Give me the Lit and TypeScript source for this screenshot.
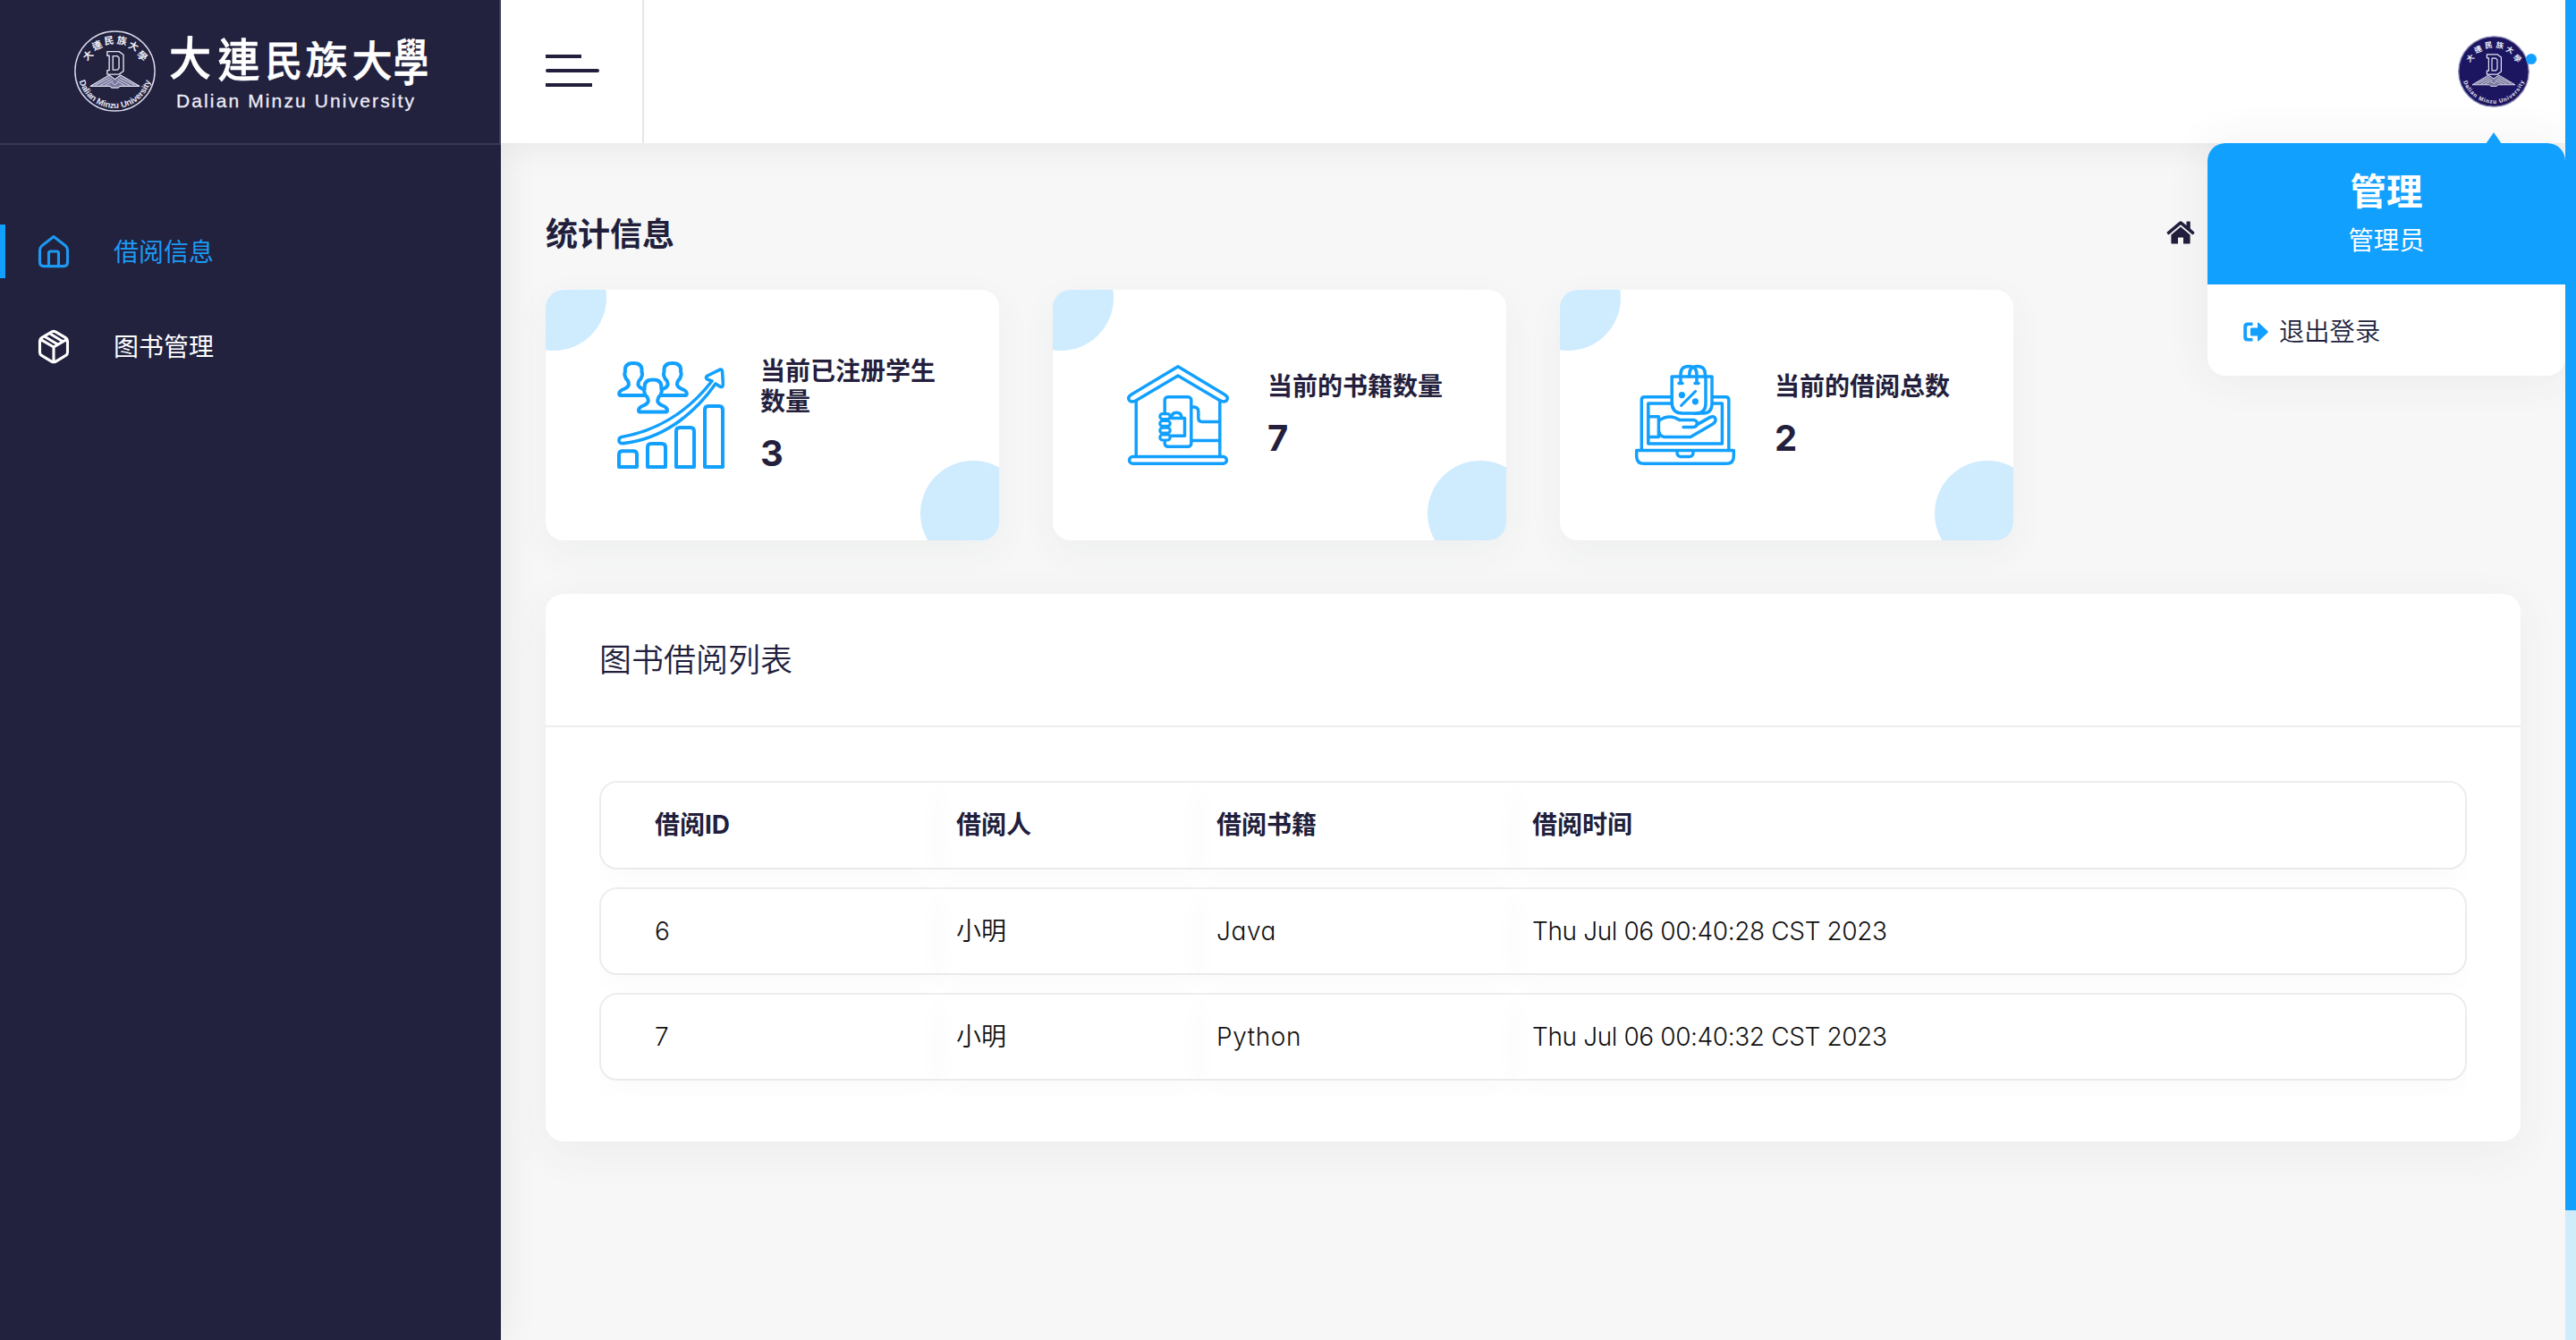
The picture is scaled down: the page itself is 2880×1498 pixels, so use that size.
import { LitElement, html, css, svg } from "lit";
import { customElement, property } from "lit/decorators.js";

const CJK = css`Inter, "Noto Sans CJK SC", sans-serif`;

/* ---------- University emblem ---------- */

const EMBLEM_CHARS: [string, number][] = [
  ["大", -60],
  ["連", -35],
  ["民", -11],
  ["族", 13],
  ["大", 37],
  ["學", 61],
];

@customElement("school-emblem")
export class SchoolEmblem extends LitElement {
  @property({ type: Boolean }) solid = false;

  static styles = css`
    :host {
      display: block;
    }
    .emblem {
      display: block;
      width: 100%;
      height: 100%;
      overflow: visible;
    }
    .hanzi {
      font-family: "Noto Sans CJK TC", sans-serif;
      font-weight: 700;
      fill: #f0f0fa;
    }
    .latin {
      font-family: "Liberation Sans", sans-serif;
      font-weight: 700;
      fill: #e6e6f4;
    }
  `;

  render() {
    const size = this.solid ? 10.5 : 12;
    const latin = this.solid ? 8 : 10.6;
    const r = this.solid ? 44.5 : 45.6;
    return html`<svg class="emblem" viewBox="0 0 100 100">
      <circle cx="50" cy="50" r="49" fill=${this.solid ? "#1c1661" : "none"} stroke=${this.solid ? "#8d8ab8" : "#d9d9ea"} stroke-width="1.6"></circle>
      ${EMBLEM_CHARS.map(([c, a]) => {
        const rad = (a * Math.PI) / 180;
        const x = 50 + 38 * Math.sin(rad);
        const y = 50 - 38 * Math.cos(rad);
        return svg`<text class="hanzi" font-size=${size} text-anchor="middle" transform="translate(${x} ${y}) rotate(${a * 0.7})" dy="4">${c}</text>`;
      })}
      <g fill="none" stroke="#e4e4f2" stroke-width="1.5" stroke-linejoin="round">
        <path d="M40.5 26 H55 L60.5 30 V50 L55 54 H40.5 V49 H43 V31 H40.5 Z"></path>
        <path d="M47.5 31.5 H53 L55 33.5 V46.5 L53 48.5 H47.5 Z"></path>
        <path d="M43 55 L50 60 L57 55 L80 68.5 H56 L54 70.5 H46 L44 68.5 H20 Z" fill="#77769c" stroke-width="1.2"></path>
        <path d="M26 67 L44 58 M32 67.5 L46 60 M38 67.5 L48 62 M74 67 L56 58 M68 67.5 L54 60 M62 67.5 L52 62 M46 64 L50 67 L54 64" stroke-width="0.9"></path>
      </g>
      <path id="arc" fill="none" d="M ${50 - r} 50 A ${r} ${r} 0 0 0 ${50 + r} 50"></path>
      <text class="latin" font-size=${latin}>
        <textPath href="#arc" startOffset="50%" text-anchor="middle" textLength=${this.solid ? 112 : 118}>Dalian Minzu University</textPath>
      </text>
    </svg>`;
  }
}

/* ---------- Sidebar ---------- */

const LOGO_CHARS: [string, number, number, number, number][] = [
  ["大", 137.5, 40, 1, 1.08],
  ["連", 192, 42.5, 1, 1.08],
  ["民", 242.5, 42, 0.88, 1],
  ["族", 290, 42, 1, 0.92],
  ["大", 341, 43, 0.96, 0.98],
  ["學", 384.5, 44.5, 0.84, 1.18],
];

const homeIcon = svg`<path d="M17 1.6 L30 11.6 Q32.5 13.6 32.5 16.5 V30 Q32.5 34.6 28 34.6 H6 Q1.5 34.6 1.5 30 V16.5 Q1.5 13.6 4 11.6 Z M11.5 34.5 V20 Q11.5 18 13.5 18 H20.5 Q22.5 18 22.5 20 V34.5"></path>`;
const boxIcon = svg`<path d="M15 1.9 Q17 0.9 19 1.9 L30.5 8.6 Q32.5 9.8 32.5 12 V25 Q32.5 27.2 30.5 28.4 L19 35.3 Q17 36.3 15 35.3 L3.5 28.4 Q1.5 27.2 1.5 25 V12 Q1.5 9.8 3.5 8.6 Z M2.3 10.4 L17 19 L31.7 10.4 M17 19 V35.5 M6.5 7 L21.5 16 M12.5 3.7 L27.2 12.7"></path>`;

@customElement("side-bar")
export class SideBar extends LitElement {
  static styles = css`
    :host {
      display: block;
      width: 560px;
      flex: none;
      background: #22213e;
      box-shadow: 0 0 42px rgba(0, 0, 0, 0.08);
      position: relative;
      z-index: 1;
      font-family: ${CJK};
    }
    .brand {
      box-sizing: border-box;
      height: 162px;
      border-bottom: 2px solid #3a3953;
      border-right: 2px solid #3a3953;
      padding: 25px 0 0 75px;
    }
    .logo {
      display: grid;
      grid-template-columns: 91px 1fr;
      width: 410px;
      height: 110px;
    }
    .seal {
      grid-area: 1 / 1;
      width: 91px;
      height: 91px;
      margin: 9px 0 0 8px;
    }
    .wordmark {
      grid-area: 1 / 1 / 2 / 3;
      width: 410px;
      height: 110px;
    }
    .brush {
      font-family: "Noto Sans CJK TC", sans-serif;
      font-weight: 500;
      font-size: 47px;
      fill: #fff;
      stroke: #fff;
      stroke-width: 0.6px;
      stroke-linejoin: round;
    }
    .latin {
      font-family: "Liberation Sans", sans-serif;
      font-size: 21px;
      fill: #ededf8;
      stroke: #ededf8;
      stroke-width: 0.3px;
    }
    .menu {
      display: flex;
      flex-direction: column;
      gap: 46px;
      padding-top: 89px;
    }
    .item {
      display: flex;
      align-items: center;
      box-sizing: border-box;
      height: 60px;
      border-left: 6px solid transparent;
      padding: 2px 0 0 37px;
      color: #fff;
      font-size: 28px;
      line-height: 42px;
    }
    .item.active {
      border-left-color: #12a0ff;
      color: #1c9af3;
    }
    .glyph {
      width: 34px;
      height: 38px;
      margin-right: 50px;
      fill: none;
      stroke: currentColor;
      stroke-width: 3.1;
      stroke-linejoin: round;
      stroke-linecap: round;
      overflow: visible;
    }
  `;

  render() {
    return html`
      <div class="brand">
        <div class="logo">
          <school-emblem class="seal"></school-emblem>
          <svg class="wordmark" viewBox="0 0 410 110">
            ${LOGO_CHARS.map(
              ([c, x, y, sx, sy]) =>
                svg`<text class="brush" text-anchor="middle" transform="translate(${x} ${y}) scale(${sx} ${sy})" dy="17.5">${c}</text>`
            )}
            <text class="latin" x="122" y="95.3" textLength="266">Dalian Minzu University</text>
          </svg>
        </div>
      </div>
      <nav class="menu">
        <a class="item active"><svg class="glyph" viewBox="0 0 34 38">${homeIcon}</svg><span>借阅信息</span></a>
        <a class="item"><svg class="glyph" viewBox="0 0 34 38">${boxIcon}</svg><span>图书管理</span></a>
      </nav>
    `;
  }
}

/* ---------- Header with the open profile menu ---------- */

@customElement("top-bar")
export class TopBar extends LitElement {
  static styles = css`
    :host {
      display: flex;
      justify-content: space-between;
      height: 160px;
      flex: none;
      background: #fff;
      position: relative;
      z-index: 2;
      box-shadow: 0 0 40px rgba(0, 0, 0, 0.08);
      clip-path: inset(0 0 -500px 0);
      font-family: ${CJK};
    }
    .toggle {
      box-sizing: border-box;
      width: 160px;
      border-right: 2px solid #e6e6e6;
      padding: 61px 0 0 50px;
      display: flex;
      flex-direction: column;
      gap: 12px;
    }
    .line {
      height: 4px;
      width: 60px;
      border-radius: 2px;
      background: #211f3c;
    }
    .line.short {
      width: 40px;
      border-radius: 0;
    }
    .line.mid {
      width: 52px;
      border-radius: 0;
    }
    .profile {
      position: relative;
      width: 80px;
      height: 80px;
      margin: 40px 40px 0 0;
    }
    .avatar {
      width: 80px;
      height: 80px;
    }
    .dot {
      position: absolute;
      left: 76px;
      top: 20px;
      width: 12px;
      height: 12px;
      border-radius: 50%;
      background: #12a0ff;
    }
    .dropdown {
      position: absolute;
      right: -40px;
      top: 120px;
      width: 400px;
      height: 260px;
      border-radius: 20px;
      background: #fff;
      box-shadow: 0 0 50px rgba(82, 63, 105, 0.08);
    }
    .arrow {
      position: absolute;
      left: 311px;
      top: -12px;
      width: 18px;
      height: 13px;
      background: #12a0ff;
      clip-path: polygon(50% 0, 100% 100%, 0 100%);
    }
    .head {
      box-sizing: border-box;
      height: 158px;
      padding-top: 31px;
      border-radius: 20px 20px 0 0;
      background: #12a0ff;
      color: #fff;
      text-align: center;
    }
    .name {
      font-size: 40.5px;
      line-height: 48px;
      font-weight: 700;
    }
    .role {
      font-size: 28.4px;
      line-height: 42px;
      margin-top: 9px;
    }
    .logout {
      display: flex;
      align-items: center;
      padding: 32px 40px 30px;
      height: 42px;
      font-size: 28.3px;
      line-height: 42px;
      font-weight: 350;
      color: #211f3c;
    }
    .exit {
      width: 28px;
      height: 22px;
      margin-right: 12px;
      fill: #12a0ff;
    }
  `;

  render() {
    return html`
      <div class="toggle">
        <div class="line short"></div>
        <div class="line"></div>
        <div class="line mid"></div>
      </div>
      <div class="profile">
        <school-emblem class="avatar" solid></school-emblem>
        <div class="dot"></div>
        <div class="dropdown">
          <div class="arrow"></div>
          <div class="head">
            <div class="name">管理</div>
            <div class="role">管理员</div>
          </div>
          <div class="logout">
            <svg class="exit" viewBox="0 0 28 22">
              <path d="M10.5 0.5 V4 H6 Q4 4 4 6 V16 Q4 18 6 18 H10.5 V21.5 H5 Q0.3 21.5 0.3 17 V5 Q0.3 0.5 5 0.5 Z"></path>
              <path d="M16 1.6 Q16 0 17.6 1 L27.2 10 Q28.2 11 27.2 12 L17.6 21 Q16 22 16 20.4 V15.5 H9 Q8 15.5 8 14.5 V7.5 Q8 6.5 9 6.5 H16 Z"></path>
            </svg>
            <span>退出登录</span>
          </div>
        </div>
      </div>
    `;
  }
}

/* ---------- Statistic cards ---------- */

const person =
  "M-9.3 9.5 C-9.3 3.5 -5 2 0 2 C5 2 9.3 3.5 9.3 9.5 V12 Q10.6 14 9 17.5 Q8.6 19.5 6.6 21 Q5 24 5.2 26 Q6 29 10 30.6 Q16 32.8 16 36 Q16 38 14.5 38 H-14.5 Q-16 38 -16 36 Q-16 32.8 -10 30.6 Q-6 29 -5.2 26 Q-5 24 -6.6 21 Q-8.6 19.5 -9 17.5 Q-10.6 14 -9.3 12 Z";

const growthIcon = svg`
  <g stroke-width="4" fill="#fff">
    <path d=${person} transform="translate(18.2 0)"></path>
    <path d=${person} transform="translate(61.8 0)"></path>
    <path d=${person} transform="translate(40 18.6)"></path>
    <path stroke-width="3.6" d="M5 84.5 C42 78 78 58 106 22 L100.5 19.8 Q98.2 18 101 16 L114.5 9.3 Q117.4 8.2 117.6 11.5 L118.4 25.5 Q118.4 29.6 114.8 28 L110 25 C84 62 48 87 7 91.6 Q2 92 2 88.4 Q2 85 5 84.5 Z"></path>
    <path d="M2 118 V104 Q2 100.2 6 100.2 H18 Q22 100.2 22 104 V118 Z"></path>
    <path d="M34 118 V96 Q34 92 38 92 H50 Q54 92 54 96 V118 Z"></path>
    <path d="M66 118 V78 Q66 74 70 74 H82 Q86 74 86 78 V118 Z"></path>
    <path d="M98 118 V54 Q98 50 102 50 H114 Q118 50 118 54 V118 Z"></path>
  </g>`;

const houseIcon = svg`
  <g stroke-width="3.5" fill="none">
    <path d="M13.2 44 V106 M106.8 44 V106"></path>
    <path d="M60 5.8 L112 37 Q117.2 40.4 114.2 43.8 Q111 46.4 106.5 43.6 L60 16 L13.5 43.6 Q9 46.4 5.8 43.8 Q2.8 40.4 8 37 Z" fill="#fff"></path>
    <rect x="5.6" y="106.6" width="108.8" height="7.6" rx="3.8"></rect>
    <rect x="45.2" y="39.8" width="29.6" height="55.4" rx="3.5"></rect>
    <path d="M52 63.5 H67.5 V83.3 H52"></path>
    <path d="M52.8 62.5 Q53 57.2 58.4 57.2 Q63.8 57.2 64 62.5"></path>
    <path d="M76 51 Q82.8 50.5 82.8 56 V63 Q82.8 67.5 87 67.5 H106.5 M76 88.4 H106.5"></path>
    <g fill="#fff" stroke-width="3.2">
      <rect x="39.8" y="58.6" width="11.4" height="6" rx="3"></rect>
      <rect x="39.8" y="66.4" width="11.4" height="6" rx="3"></rect>
      <rect x="39.8" y="74.2" width="11.4" height="6" rx="3"></rect>
      <rect x="39.8" y="82" width="11.4" height="6" rx="3"></rect>
    </g>
  </g>`;

const laptopIcon = svg`
  <g stroke-width="3.5" fill="none">
    <path d="M11.3 98 V43 Q11.3 39.7 14.6 39.7 H105.4 Q108.8 39.7 108.8 43 V98"></path>
    <rect x="18.8" y="47" width="82.6" height="45"></rect>
    <path d="M5.7 99.5 H114.3 V106 Q114.3 114.3 106 114.3 H14 Q5.7 114.3 5.7 106 Z"></path>
    <path d="M51 100 Q50.6 106.6 55 106.6 H65 Q69.4 106.6 69 100"></path>
    <path d="M82 17 H90 V47 Q90 58 80 58 H70" fill="#fff"></path>
    <path d="M45.2 17 H83 V47 Q83 58 72 58 H57 Q45.2 58 45.2 46 Z" fill="#fff"></path>
    <path d="M55 24 V14.5 Q55 5.6 64 5.6 Q73 5.6 73 14.5 V24 M64.8 17 V14.5 Q64.8 5.6 73.6 5.6 Q82.4 5.6 82.4 14.5 V17"></path>
    <path d="M53 24.4 H57 M71 24.4 H75"></path>
    <path d="M71.6 33.4 L55.6 49.4" stroke-width="3"></path>
    <circle cx="56.4" cy="37.6" r="3.6" fill="#12a0ff" stroke="none"></circle>
    <circle cx="71.4" cy="44.8" r="3.6" fill="#12a0ff" stroke="none"></circle>
    <path d="M20 61.7 H30.4 V84.5 H20"></path>
    <path d="M31 66 Q40 59.6 49 63.2 L54 65.6 H69.5 Q74 66 73.4 70.6 L88 62.4 Q92.6 60.4 94 64.6 Q94.6 67.6 91 70 L66 84.5 H37 Q31.6 84 31 79"></path>
    <path d="M58 73.6 H68.5 Q72.6 73.6 73.4 70.2"></path>
  </g>`;

@customElement("stat-card")
export class StatCard extends LitElement {
  @property() label = "";
  @property({ type: Number }) value = 0;
  @property({ attribute: false }) icon: unknown = null;

  static styles = css`
    :host {
      display: block;
      border-radius: 20px;
      background: #fff;
      box-shadow: 0 12px 40px rgba(62, 73, 84, 0.05);
      color: #241f3d;
      font-family: ${CJK};
    }
    .body {
      position: relative;
      overflow: hidden;
      box-sizing: border-box;
      height: 280px;
      border-radius: 20px;
      padding: 0 60px 0 80px;
      display: flex;
      align-items: center;
      gap: 40px;
    }
    .bubble {
      position: absolute;
      width: 118px;
      height: 118px;
      border-radius: 50%;
      background: #cfebfe;
    }
    .bubble.tl {
      left: -50px;
      top: -50px;
    }
    .bubble.br {
      left: 419px;
      top: 191px;
    }
    .icon {
      width: 120px;
      height: 120px;
      flex: none;
      stroke: #12a0ff;
      stroke-linejoin: round;
      stroke-linecap: round;
    }
    .label {
      padding-top: 2px;
      font-size: 28px;
      line-height: 33.6px;
      font-weight: 700;
    }
    .value {
      margin-top: 16px;
      font-size: 40px;
      line-height: 48px;
      font-weight: 700;
    }
  `;

  render() {
    return html`<div class="body">
      <div class="bubble tl"></div>
      <div class="bubble br"></div>
      <svg class="icon" viewBox="0 0 120 120">${this.icon}</svg>
      <div>
        <div class="label">${this.label}</div>
        <div class="value">${this.value}</div>
      </div>
    </div>`;
  }
}

/* ---------- Borrow list ---------- */

const HEADERS = ["借阅ID", "借阅人", "借阅书籍", "借阅时间"];
const ROWS = [
  ["6", "小明", "Java", "Thu Jul 06 00:40:28 CST 2023"],
  ["7", "小明", "Python", "Thu Jul 06 00:40:32 CST 2023"],
];

@customElement("borrow-list")
export class BorrowList extends LitElement {
  static styles = css`
    :host {
      display: block;
      box-sizing: border-box;
      height: 612px;
      border-radius: 20px;
      background: #fff;
      box-shadow: 0 12px 50px rgba(62, 73, 84, 0.06);
      font-family: ${CJK};
    }
    .title {
      box-sizing: border-box;
      height: 149px;
      border-bottom: 2px solid #eee;
      padding: 47px 60px 0;
      font-size: 36px;
      line-height: 54px;
      font-weight: 350;
      color: #211f3c;
    }
    .table {
      display: flex;
      flex-direction: column;
      gap: 20px;
      margin: 60px 60px 0;
      padding-bottom: 20px;
      overflow: hidden;
    }
    .row {
      display: grid;
      grid-template-columns: 377px 291px 353px 1fr;
      box-sizing: border-box;
      height: 98px;
      border: 2px solid #eee;
      border-radius: 20px;
      font-size: 28px;
      font-weight: 300;
      line-height: 94px;
      color: #111;
    }
    .row.head {
      height: 99px;
      font-weight: 700;
      color: #211f3c;
    }
    .cell {
      padding-left: 20px;
      box-shadow: 0 10px 30px rgba(0, 0, 0, 0.025);
      font-feature-settings: "cv11";
    }
    .cell.person {
      font-weight: 350;
    }
    .cell.book {
      letter-spacing: 0.6px;
    }
    .cell.time {
      letter-spacing: -0.38px;
    }
    .head .cell {
      font-weight: 700;
      letter-spacing: 0;
    }
    .cell:first-child {
      padding-left: 60px;
      border-radius: 18px 0 0 18px;
    }
    .cell:last-child {
      border-radius: 0 18px 18px 0;
    }
  `;

  private cells(values: string[]) {
    const kinds = ["number", "person", "book", "time"];
    return values.map((v, i) => html`<div class="cell ${kinds[i]}">${v}</div>`);
  }

  render() {
    return html`
      <div class="title">图书借阅列表</div>
      <div class="table">
        <div class="row head">${this.cells(HEADERS)}</div>
        ${ROWS.map((r) => html`<div class="row">${this.cells(r)}</div>`)}
      </div>
    `;
  }
}

/* ---------- Page ---------- */

@customElement("app-root")
export class AppRoot extends LitElement {
  static styles = css`
    :host {
      display: flex;
      width: 100%;
      height: 1498px;
      overflow: hidden;
      background: #f7f7f7;
      font-family: ${CJK};
    }
    .main {
      flex: 1;
      min-width: 0;
      display: flex;
      flex-direction: column;
      position: relative;
      z-index: 2;
    }
    .content {
      padding: 0 50px;
    }
    .titlebar {
      display: flex;
      align-items: center;
      justify-content: space-between;
      height: 164px;
      padding: 0 364px 0 0;
      box-sizing: border-box;
    }
    .title {
      padding-top: 40px;
      font-size: 36px;
      line-height: 54px;
      font-weight: 700;
      color: #211f3c;
    }
    .crumb {
      width: 32px;
      height: 26px;
      padding-top: 36px;
      fill: #211f3c;
    }
    .stats {
      display: grid;
      grid-template-columns: repeat(4, 1fr);
      gap: 60px;
      margin-bottom: 60px;
    }
    .scroll {
      width: 12px;
      flex: none;
      background: #cfecfd;
      position: relative;
      z-index: 3;
    }
    .thumb {
      height: 1353px;
      background: #12a0ff;
    }
  `;

  render() {
    return html`
      <side-bar></side-bar>
      <div class="main">
        <top-bar></top-bar>
        <div class="content">
          <div class="titlebar">
            <div class="title">统计信息</div>
            <svg class="crumb" viewBox="0 0 32 26">
              <path d="M16 6.6 L26.6 15.6 V24.4 Q26.6 25.6 25.4 25.6 H19 V18.4 H13 V25.6 H6.6 Q5.4 25.6 5.4 24.4 V15.6 Z"></path>
              <path d="M14.6 0.7 Q16 -0.3 17.4 0.7 L22.5 5 V1.2 Q22.5 0.4 23.3 0.4 H26 Q26.8 0.4 26.8 1.2 V8.6 L31 12.2 Q31.8 13 31.2 13.8 L30.2 15 Q29.5 15.6 28.8 15 L16 4.2 L3.2 15 Q2.5 15.6 1.8 15 L0.8 13.8 Q0.2 13 1 12.2 Z"></path>
            </svg>
          </div>
          <div class="stats">
            <stat-card label="当前已注册学生数量" .value=${3} .icon=${growthIcon}></stat-card>
            <stat-card label="当前的书籍数量" .value=${7} .icon=${houseIcon}></stat-card>
            <stat-card label="当前的借阅总数" .value=${2} .icon=${laptopIcon}></stat-card>
          </div>
          <borrow-list></borrow-list>
        </div>
      </div>
      <div class="scroll"><div class="thumb"></div></div>
    `;
  }
}
